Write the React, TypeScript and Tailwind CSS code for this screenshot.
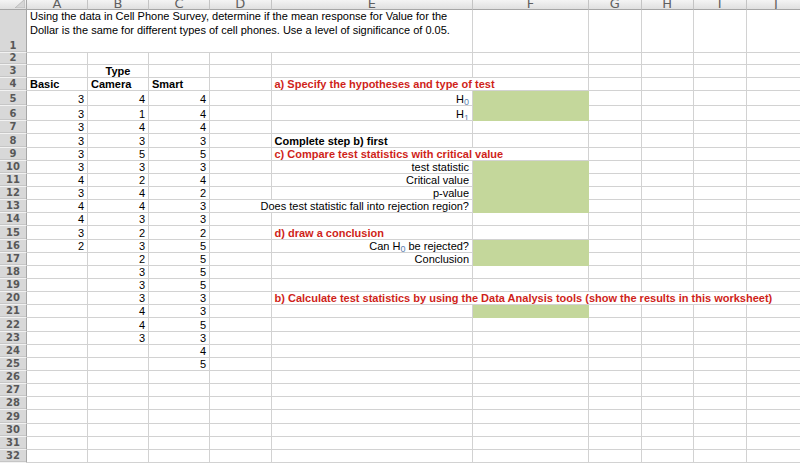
import React from "react";

type Cell = {
  col: number;
  span?: number;
  text?: React.ReactNode;
  align?: "left" | "right" | "center";
  tone?: "red" | "bold";
  green?: boolean;
  wrap?: boolean;
};

const LETTERS = ["A", "B", "C", "D", "E", "F", "G", "H", "I", "J"];

// survey answers, starting at row 5
const basic = [3, 3, 3, 3, 3, 3, 4, 3, 4, 4, 3, 2];
const camera = [4, 1, 4, 3, 5, 3, 2, 4, 4, 3, 2, 3, 2, 3, 3, 3, 4, 4, 3];
const smart = [4, 4, 4, 3, 5, 3, 4, 2, 3, 3, 2, 5, 5, 5, 5, 3, 3, 5, 3, 4, 5];

const Sub = ({ n }: { n: string }) => (
  <sub className="text-[9px] text-[#5b80ae]">{n}</sub>
);

const extra: Record<number, Cell[]> = {
  1: [
    {
      col: 0,
      span: 5,
      wrap: true,
      text: "Using the data in Cell Phone Survey, determine if the mean response for Value for the Dollar is the same for different types of cell phones. Use a level of significance of 0.05.",
    },
  ],
  3: [{ col: 1, text: "Type", tone: "bold", align: "center" }],
  4: [
    { col: 0, text: "Basic", tone: "bold" },
    { col: 1, text: "Camera", tone: "bold" },
    { col: 2, text: "Smart", tone: "bold" },
    { col: 4, span: 2, text: "a) Specify the hypotheses and type of test", tone: "red" },
  ],
  5: [
    { col: 4, align: "right", text: <>H<Sub n="0" /></> },
    { col: 5, green: true },
  ],
  6: [
    { col: 4, align: "right", text: <>H<Sub n="1" /></> },
    { col: 5, green: true },
  ],
  8: [{ col: 4, text: "Complete step b) first", tone: "bold" }],
  9: [{ col: 4, span: 2, text: "c) Compare test statistics with critical value", tone: "red" }],
  10: [
    { col: 4, align: "right", text: "test statistic" },
    { col: 5, green: true },
  ],
  11: [
    { col: 4, align: "right", text: "Critical value" },
    { col: 5, green: true },
  ],
  12: [
    { col: 4, align: "right", text: "p-value" },
    { col: 5, green: true },
  ],
  13: [
    { col: 3, span: 2, align: "right", text: "Does test statistic fall into rejection region?" },
    { col: 5, green: true },
  ],
  15: [{ col: 4, text: "d) draw a conclusion", tone: "red" }],
  16: [
    { col: 4, align: "right", text: <>Can H<Sub n="0" /> be rejected?</> },
    { col: 5, green: true },
  ],
  17: [
    { col: 4, align: "right", text: "Conclusion" },
    { col: 5, green: true },
  ],
  20: [
    {
      col: 4,
      span: 6,
      text: "b) Calculate test statistics by using the Data Analysis tools (show the results in this worksheet)",
      tone: "red",
    },
  ],
  21: [{ col: 5, green: true }],
};

const spanCls: Record<number, string> = {
  1: "",
  2: "col-span-2",
  5: "col-span-5",
  6: "col-span-6",
};

function rowCells(r: number): Cell[] {
  const map: Record<number, Cell> = {};
  const i = r - 5;
  if (i >= 0 && basic[i] !== undefined) map[0] = { col: 0, text: basic[i], align: "right" };
  if (i >= 0 && camera[i] !== undefined) map[1] = { col: 1, text: camera[i], align: "right" };
  if (i >= 0 && smart[i] !== undefined) map[2] = { col: 2, text: smart[i], align: "right" };
  (extra[r] || []).forEach((c) => (map[c.col] = c));

  const out: Cell[] = [];
  let c = 0;
  while (c < 10) {
    const cell = map[c] || { col: c };
    out.push(cell);
    c += cell.span || 1;
  }
  return out;
}

function SheetCell({ cell }: { cell: Cell }) {
  const align =
    cell.align === "right"
      ? "justify-end"
      : cell.align === "center"
      ? "justify-center"
      : "justify-start";
  const tone =
    cell.tone === "red"
      ? "font-bold text-[#cf1f1a]"
      : cell.tone === "bold"
      ? "font-bold text-black"
      : "text-black";
  const fill = cell.green
    ? "bg-[#c4d79b] border-[#c4d79b]"
    : "bg-white border-[#d2d2d2]";

  if (cell.wrap) {
    return (
      <div
        className={`${spanCls[cell.span || 1]} border-r border-b ${fill} px-[3px] text-[11px] leading-[13.5px] text-black overflow-hidden`}
      >
        {cell.text}
      </div>
    );
  }

  return (
    <div
      className={`${spanCls[cell.span || 1]} flex items-end ${align} border-r border-b ${fill} px-[3px] text-[11px] leading-[12px] whitespace-nowrap overflow-hidden ${tone}`}
    >
      {cell.text !== undefined && <span>{cell.text}</span>}
    </div>
  );
}

export default function App() {
  const rows = Array.from({ length: 32 }, (_, k) => k + 1);

  return (
    <div className="w-[800px] h-[463px] overflow-hidden bg-white font-['Liberation_Sans',Arial,sans-serif]">
      <div className="grid w-max grid-cols-[27px_61px_61px_61px_61.5px_201.5px_116px_52.5px_52.5px_52.5px_60px] grid-rows-[10px_42.7px_12.7px_12.7px_12.7px_15.3px_15.3px_repeat(26,13.15px)]">
        {/* corner */}
        <div className="relative border-r border-r-[#a6a6a6] border-b border-b-[#a6a6a6] bg-gradient-to-b from-[#f4f4f4] to-[#e0e0e0]">
          <svg className="absolute right-[1px] bottom-[1px]" width="10" height="9" viewBox="0 0 10 9">
            <polygon points="10,0 10,9 0,9" fill="#d6d6d6" stroke="#b4b4b4" strokeWidth="0.8" />
          </svg>
        </div>
        {LETTERS.map((l) => (
          <div
            key={l}
            className="flex justify-center overflow-hidden border-r border-r-[#c4c4c4] border-b border-b-[#a6a6a6] bg-gradient-to-b from-[#f4f4f4] to-[#e0e0e0]"
          >
            <span className="-mt-[3px] font-['DejaVu_Sans',sans-serif] text-[13px] leading-[13px] text-[#5f5f5f]">
              {l}
            </span>
          </div>
        ))}

        {rows.map((r) => (
          <React.Fragment key={r}>
            <div className="flex items-end justify-center border-r border-r-[#a6a6a6] border-b border-b-[#f2f2f2] bg-[#d8d8d8] shadow-[inset_0_-1px_0_#c6c6c6] font-['DejaVu_Sans',sans-serif] text-[10px] font-bold leading-[12px] text-[#585858]">
              {r}
            </div>
            {rowCells(r).map((cell) => (
              <SheetCell key={cell.col} cell={cell} />
            ))}
          </React.Fragment>
        ))}
      </div>
    </div>
  );
}
